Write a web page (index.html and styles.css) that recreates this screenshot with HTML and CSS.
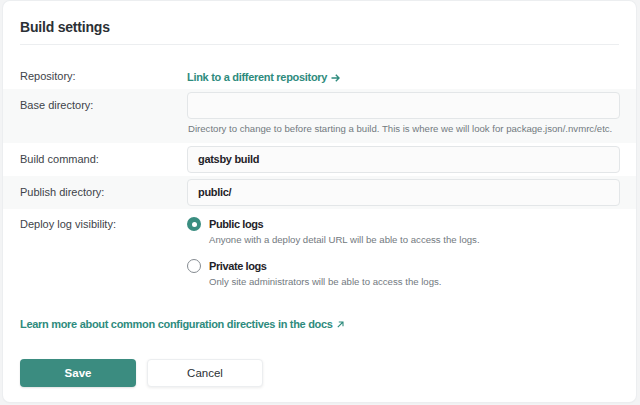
FILE: index.html
```html
<!DOCTYPE html>
<html>
<head>
<meta charset="utf-8">
<link rel="stylesheet" href="styles.css">
</head>
<body>
<div class="card">
  <h2 class="title">Build settings</h2>
  <div class="row row-repo">
    <div class="label">Repository:</div>
    <div class="field"><a class="link">Link to a different repository <svg class="arrow" width="9" height="8" viewBox="0 0 9 8"><path d="M0.5 4H8M4.8 0.8L8 4L4.8 7.2" fill="none" stroke="currentColor" stroke-width="1.4"/></svg></a></div>
  </div>
  <div class="row shaded">
    <div class="label">Base directory:</div>
    <div class="field">
      <div class="input"></div>
      <div class="help">Directory to change to before starting a build. This is where we will look for package.json/.nvmrc/etc.</div>
    </div>
  </div>
  <div class="row">
    <div class="label">Build command:</div>
    <div class="field"><div class="input">gatsby build</div></div>
  </div>
  <div class="row shaded">
    <div class="label">Publish directory:</div>
    <div class="field"><div class="input">public/</div></div>
  </div>
  <div class="row row-radio">
    <div class="label">Deploy log visibility:</div>
    <div class="field radios">
      <div class="radio-item">
        <span class="radio checked"></span>
        <div class="radio-text">
          <div class="radio-title">Public logs</div>
          <div class="radio-desc">Anyone with a deploy detail URL will be able to access the logs.</div>
        </div>
      </div>
      <div class="radio-item">
        <span class="radio"></span>
        <div class="radio-text">
          <div class="radio-title">Private logs</div>
          <div class="radio-desc">Only site administrators will be able to access the logs.</div>
        </div>
      </div>
    </div>
  </div>
  <div class="docs"><a class="link">Learn more about common configuration directives in the docs <svg class="ext" width="7" height="7" viewBox="0 0 7 7"><path d="M0.8 6.2L6 1M1.8 1H6V5.2" fill="none" stroke="currentColor" stroke-width="1.1"/></svg></a></div>
  <div class="actions">
    <button class="btn btn-primary">Save</button>
    <button class="btn btn-secondary">Cancel</button>
  </div>
</div>
</body>
</html>
```
FILE: styles.css
```css
html, body {
  margin: 0;
  padding: 0;
  background: #f3f4f5;
}
body {
  font-family: "Liberation Sans", Arial, sans-serif;
  color: #2e3338;
  width: 640px;
  height: 405px;
  overflow: hidden;
}
.card {
  margin: 1px 4px 0 3px;
  background: #fff;
  border-radius: 7px;
  box-shadow: 0 0 0 1px #eceef0, 0 1px 2px rgba(0,0,0,0.05);
  height: 401px;
  box-sizing: border-box;
  padding-top: 17px;
}
.title {
  margin: 0 17px;
  font-size: 14px;
  font-weight: 700;
  letter-spacing: -0.2px;
  line-height: 18px;
  padding-bottom: 8px;
  border-bottom: 1px solid #eceef0;
  color: #2b3035;
}
.row {
  display: flex;
  align-items: flex-start;
  padding: 3px 16px 3px 17px;
}
.row-repo {
  margin-top: 18px;
  height: 26px;
  padding-top: 0;
  padding-bottom: 0;
  align-items: center;
}
.shaded {
  background: #f8f9f9;
}
.label {
  width: 167px;
  flex: none;
  font-size: 11px;
  line-height: 27px;
  color: #3d4349;
}
.row-repo .label { line-height: 26px; }
.field {
  flex: 1;
  min-width: 0;
}
.link {
  color: #2e8b7d;
  font-weight: 700;
  font-size: 11px;
  letter-spacing: -0.3px;
  text-decoration: none;
  white-space: nowrap;
}
.arrow {
  vertical-align: -0.5px;
  margin-left: 1px;
}
.input {
  height: 27px;
  box-sizing: border-box;
  border: 1px solid #e3e6e8;
  border-radius: 4px;
  background: #fbfbfb;
  padding: 0 10px;
  font-size: 11px;
  letter-spacing: -0.3px;
  font-weight: 700;
  line-height: 25px;
  color: #1f2328;
}
.help {
  font-size: 9.6px;
  color: #727980;
  line-height: 12px;
  padding: 4px 0 5px 1px;
}
.row-radio {
  padding-top: 1px;
}
.row-radio .label {
  line-height: 28px;
}
.radios {
  display: flex;
  flex-direction: column;
  gap: 6px;
}
.radio-item {
  display: flex;
  align-items: flex-start;
}
.radio {
  width: 14px;
  height: 14px;
  box-sizing: border-box;
  border-radius: 50%;
  border: 1.5px solid #858b91;
  background: #fff;
  flex: none;
  margin: 7px 8px 0 0;
  position: relative;
}
.radio.checked {
  border: none;
  background: #3a8d80;
}
.radio.checked::after {
  content: "";
  position: absolute;
  left: 4.5px;
  top: 4.5px;
  width: 5px;
  height: 5px;
  border-radius: 50%;
  background: #fff;
}
.radio-title {
  font-size: 11px;
  letter-spacing: -0.4px;
  font-weight: 700;
  line-height: 28px;
  color: #1f2328;
}
.radio-desc {
  font-size: 9.6px;
  color: #727980;
  line-height: 12px;
  margin-top: -4px;
}
.docs {
  padding: 25px 17px 0;
  line-height: 14px;
}
.ext {
  margin-left: 2px;
  vertical-align: 0;
}
.actions {
  display: flex;
  gap: 11px;
  padding: 28px 17px 0;
}
.btn {
  width: 116px;
  height: 28px;
  border-radius: 4px;
  font-family: inherit;
  font-size: 11.5px;
  cursor: pointer;
}
.btn-primary {
  background: #3b8c80;
  color: #fff;
  border: none;
  font-weight: 700;
  box-shadow: 0 1px 2px rgba(0,0,0,0.12);
}
.btn-secondary {
  background: #fff;
  color: #2b3035;
  border: 1px solid #eceef0;
  box-shadow: 0 1px 3px rgba(0,0,0,0.08);
}
```
